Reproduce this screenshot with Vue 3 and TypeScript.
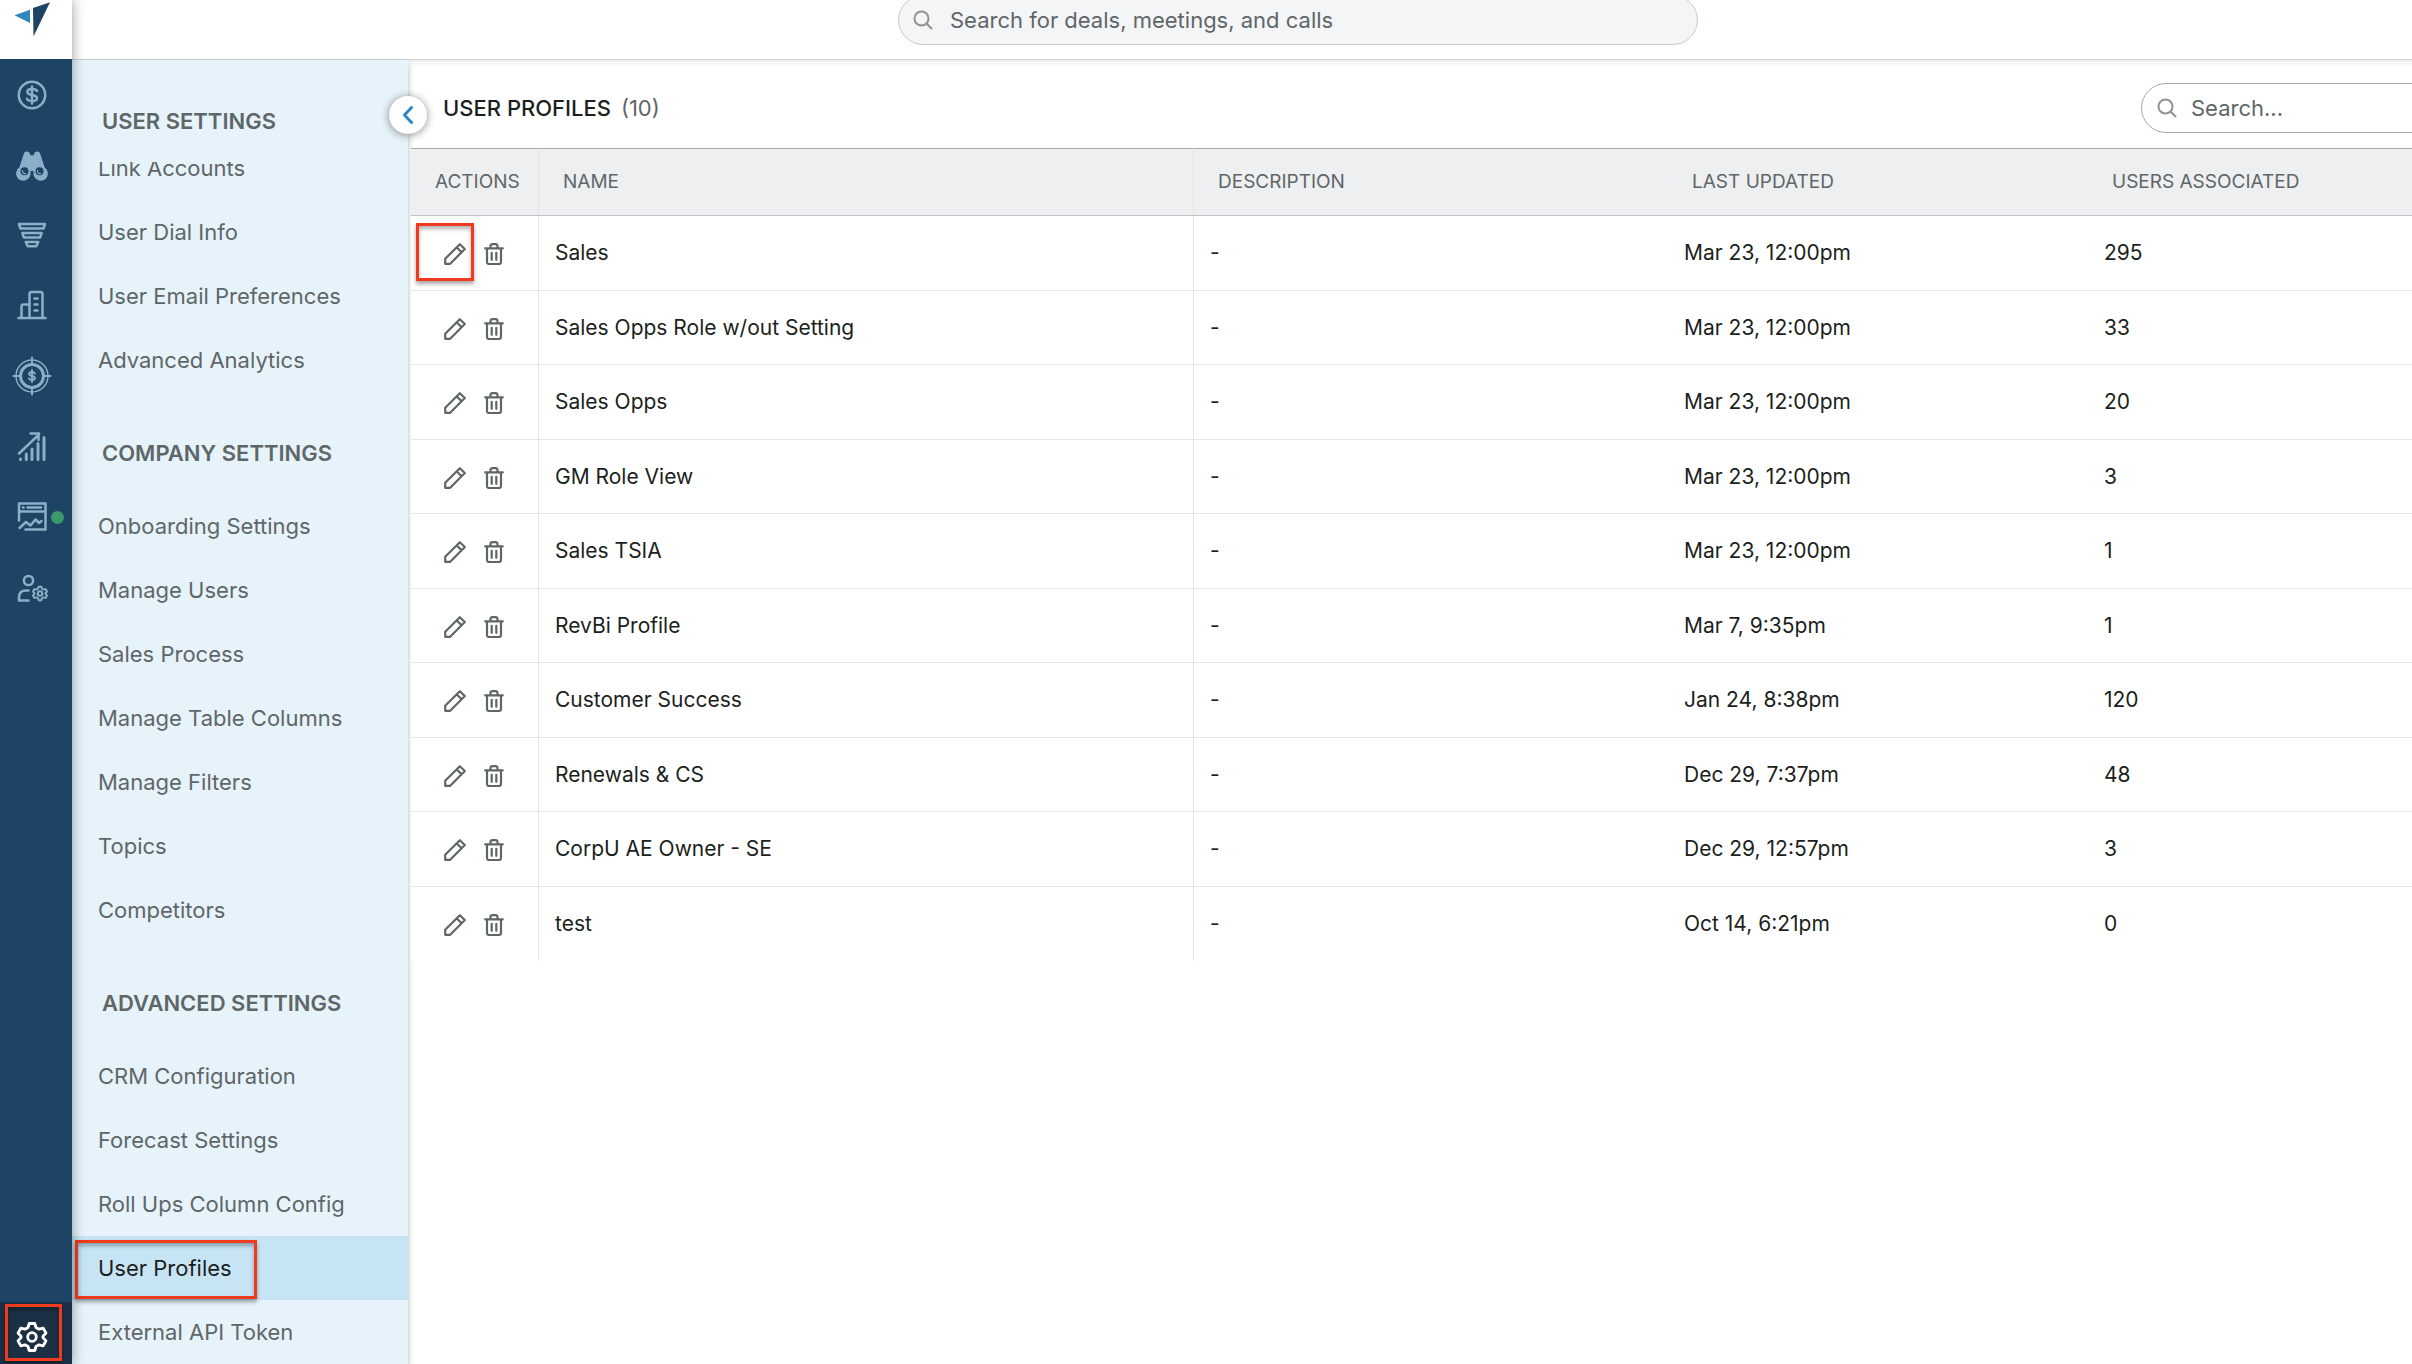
<script setup lang="ts">
import { ref } from 'vue'

interface NavSection {
  title: string
  items: string[]
}

interface Profile {
  name: string
  description: string
  updated: string
  users: number
}

const sections: NavSection[] = [
  {
    title: 'User Settings',
    items: ['Link Accounts', 'User Dial Info', 'User Email Preferences', 'Advanced Analytics'],
  },
  {
    title: 'Company Settings',
    items: [
      'Onboarding Settings',
      'Manage Users',
      'Sales Process',
      'Manage Table Columns',
      'Manage Filters',
      'Topics',
      'Competitors',
    ],
  },
  {
    title: 'Advanced Settings',
    items: [
      'CRM Configuration',
      'Forecast Settings',
      'Roll Ups Column Config',
      'User Profiles',
      'External API Token',
    ],
  },
]

const activeItem = ref('User Profiles')
const globalQuery = ref('')
const profileQuery = ref('')

const profiles: Profile[] = [
  { name: 'Sales', description: '-', updated: 'Mar 23, 12:00pm', users: 295 },
  { name: 'Sales Opps Role w/out Setting', description: '-', updated: 'Mar 23, 12:00pm', users: 33 },
  { name: 'Sales Opps', description: '-', updated: 'Mar 23, 12:00pm', users: 20 },
  { name: 'GM Role View', description: '-', updated: 'Mar 23, 12:00pm', users: 3 },
  { name: 'Sales TSIA', description: '-', updated: 'Mar 23, 12:00pm', users: 1 },
  { name: 'RevBi Profile', description: '-', updated: 'Mar 7, 9:35pm', users: 1 },
  { name: 'Customer Success', description: '-', updated: 'Jan 24, 8:38pm', users: 120 },
  { name: 'Renewals & CS', description: '-', updated: 'Dec 29, 7:37pm', users: 48 },
  { name: 'CorpU AE Owner - SE', description: '-', updated: 'Dec 29, 12:57pm', users: 3 },
  { name: 'test', description: '-', updated: 'Oct 14, 6:21pm', users: 0 },
]
</script>

<template>
  <div class="app">
    <aside class="rail">
      <a class="logo" href="#" aria-label="Home">
        <svg width="72" height="59" viewBox="0 0 72 59">
          <path d="M14.5 15.3 30 9.7V23z" fill="#2f86c0" />
          <path d="M33 8 50 2.2 33.5 36.5z" fill="#1d4464" />
        </svg>
      </a>
      <nav class="rail-nav" aria-label="Main">
        <a href="#" aria-label="Deals">
          <svg viewBox="0 0 38 38" class="icon">
            <circle cx="19" cy="19" r="13.2" />
            <path d="M19 10.5v17M24 15c-.6-1.5-2.4-2-5-2-2.8 0-4.6 1-4.6 2.9 0 4.200 9.600 2.100 9.600 6.300 0 1.900-1.900 2.800-4.900 2.800-2.900 0-4.700-.7-5.100-2.200" />
          </svg>
        </a>
        <a href="#" aria-label="Prospecting">
          <svg viewBox="0 0 38 38" class="icon">
            <path
              d="M13.5 6.500c1.400-.3 2.700.4 3.200 1.800l.5 2h3.600l.5-2c.5-1.400 1.800-2.100 3.200-1.800 1.500.2 2.300 1 2.800 2.500l4.400 13.600a7.200 7.200 0 1 1-11.200 5.600V26h-3v2.200A7.200 7.200 0 1 1 6.300 22.600L10.700 9c.5-1.500 1.300-2.300 2.800-2.500z"
              class="solid"
              transform="translate(0 -1)"
            />
            <circle cx="11.500" cy="25.200" r="4" class="cut" />
            <circle cx="26.500" cy="25.200" r="4" class="cut" />
            <path d="M9.500 24.500a2.500 2.500 0 0 0 3 3M24.500 24.500a2.500 2.500 0 0 0 3 3" stroke-width="1.200" />
          </svg>
        </a>
        <a href="#" aria-label="Pipeline">
          <svg viewBox="0 0 38 38" class="icon">
            <path d="M6 8h26l-1.500 4.500h-23zM9.300 17h19.400l-1.600 4.500H10.900zM12.700 26h12.600l-2 4.200h-8.600z" />
          </svg>
        </a>
        <a href="#" aria-label="Accounts">
          <svg viewBox="0 0 38 38" class="icon">
            <path d="M5.500 32h27M8.500 32V20.500q0-2 2-2h6M16.500 32V8q0-2 2-2h9q2 0 2 2v24" />
            <path d="M21.500 12.500h3M21.500 18.500h3M21.500 24.500h3" />
          </svg>
        </a>
        <a href="#" aria-label="Forecast">
          <svg viewBox="0 0 40 40" class="icon large">
            <circle cx="20" cy="20" r="16" stroke-width="1.500" />
            <circle cx="20" cy="20" r="11.500" stroke-width="3" />
            <path d="M20 1.500v6M20 32.500v6M1.500 20h6M32.500 20h6" stroke-width="2" />
            <path d="M20 14v12M22.800 17.500c-.5-1-1.400-1.500-2.800-1.500-1.700 0-2.800.7-2.800 1.900 0 2.700 5.700 1.400 5.700 4.200 0 1.200-1.200 2-2.900 2-1.500 0-2.600-.6-3-1.600" stroke-width="2" />
          </svg>
        </a>
        <a href="#" aria-label="Trends">
          <svg viewBox="0 0 38 38" class="icon">
            <path d="M6 25.500 26 6.500M17.500 5.500H26M25.500 6v6" />
            <path d="M7.500 31.500v-.5M13.300 31.500v-5.500M19 31.500V21M25 31.500V15.500M31 31.500V9.500" stroke-width="3" />
          </svg>
        </a>
        <a href="#" aria-label="Analytics">
          <svg viewBox="0 0 38 38" class="icon">
            <path d="M6 22.500V5.500h26.500v26h-20M6 13.500h26.500" />
            <path d="M10 9.500h.5M14.500 9.500H28" />
            <path d="m6.500 30 6.500-6 4.500 3.500 5-6 3.500 3.500 2.500-2" />
          </svg>
          <span class="dot"></span>
        </a>
        <a href="#" aria-label="Team">
          <svg viewBox="0 0 38 38" class="icon">
            <circle cx="15.500" cy="12.500" r="4.600" />
            <path d="M15.500 22.500H13q-7 0-7 7v3h9.500" />
            <g transform="translate(27 25.500) scale(.5)" stroke-width="4">
              <circle r="4.500" />
              <path
                d="M-2.800-13.500h5.600l1.200 4 3 1.700 4.200-1 2.800 4.900-3 3.100v1.600l3 3.100-2.800 4.900-4.200-1-3 1.700-1.200 4h-5.600l-1.200-4-3-1.700-4.200 1-2.800-4.900 3-3.100v-1.600l-3-3.100 2.800-4.900 4.200 1 3-1.700z"
              />
            </g>
          </svg>
        </a>
      </nav>
      <a class="settings" href="#" aria-label="Settings">
        <svg width="32" height="32" viewBox="-16 -16 32 32">
          <circle r="4.300" />
          <path
            d="M-2.800-13.500h5.600l1.200 4 3 1.700 4.200-1 2.800 4.900-3 3.100v1.600l3 3.100-2.800 4.900-4.200-1-3 1.700-1.200 4h-5.600l-1.200-4-3-1.700-4.200 1-2.800-4.900 3-3.100v-1.600l-3-3.100 2.800-4.900 4.200 1 3-1.700z"
          />
        </svg>
      </a>
    </aside>

    <div class="page">
      <header class="topbar">
        <label class="search global">
          <svg width="20" height="20" viewBox="0 0 20 20"><circle cx="8.500" cy="8.500" r="7" /><path d="m13.500 13.500 5 5" /></svg>
          <input v-model="globalQuery" type="text" aria-label="Global search" placeholder="Search for deals, meetings, and calls" />
        </label>
      </header>

      <div class="body">
        <aside class="sidebar">
          <h2 class="pinned">{{ sections[0].title }}</h2>
          <nav class="menu" aria-label="Settings">
            <div v-for="(section, index) in sections" :key="section.title" class="section">
              <h2 v-if="index > 0">{{ section.title }}</h2>
              <a
                v-for="item in section.items"
                :key="item"
                href="#"
                :class="{ active: item === activeItem }"
                @click.prevent="activeItem = item"
                >{{ item }}</a
              >
            </div>
          </nav>
          <button class="collapse" type="button" aria-label="Collapse menu">
            <svg width="12" height="20" viewBox="0 0 12 20"><path d="M9.500 2.500 2.500 10l7 7.500" /></svg>
          </button>
        </aside>

        <main class="content">
          <div class="heading">
            <h1>User Profiles <span>({{ profiles.length }})</span></h1>
            <label class="search local">
              <svg width="20" height="20" viewBox="0 0 20 20"><circle cx="8.500" cy="8.500" r="7" /><path d="m13.500 13.500 5 5" /></svg>
              <input v-model="profileQuery" type="text" aria-label="Search profiles" placeholder="Search..." />
            </label>
          </div>
          <table>
            <thead>
              <tr>
                <th class="actions">Actions</th>
                <th class="name">Name</th>
                <th>Description</th>
                <th class="updated">Last Updated</th>
                <th class="users">Users Associated</th>
              </tr>
            </thead>
            <tbody>
              <tr v-for="(profile, index) in profiles" :key="profile.name">
                <td class="actions">
                  <div class="tools">
                    <button type="button" :class="{ marked: index === 0 }" :aria-label="`Edit ${profile.name}`">
                      <svg width="22" height="22" viewBox="0 0 22 22">
                        <path d="M1.200 20.800v-5L15.800 1.200l5 4.800L6.200 20.800zM12.800 4.500l4.800 4.800" />
                      </svg>
                    </button>
                    <button type="button" :aria-label="`Delete ${profile.name}`">
                      <svg width="20" height="22" viewBox="0 0 20 22">
                        <path d="M1.200 5.300h17.600M3 5.500V19q0 2 2 2h10q2 0 2-2V5.500M6.500 5V3q0-1.800 2-1.800h3q2 0 2 1.800v2" />
                        <path d="M7.700 9.800v7M12.300 9.800v7" />
                      </svg>
                    </button>
                  </div>
                </td>
                <td class="name">{{ profile.name }}</td>
                <td>{{ profile.description }}</td>
                <td>{{ profile.updated }}</td>
                <td>{{ profile.users }}</td>
              </tr>
            </tbody>
          </table>
        </main>
      </div>
    </div>
  </div>
</template>

<style>
html,
body {
  overflow: hidden;
  background: #fff;
}
</style>

<style scoped>
.app {
  display: flex;
  width: calc(100% + 112px);
  height: 100vh;
  font-family: Inter, 'Liberation Sans', sans-serif;
  font-optical-sizing: none;
  font-size: 22px;
  line-height: 30px;
  color: #1c1f20;
}

svg {
  display: block;
  flex: none;
  fill: none;
  stroke: currentColor;
  stroke-linecap: round;
  stroke-linejoin: round;
}

a {
  color: inherit;
  text-decoration: none;
}

button {
  padding: 0;
  border: 0;
  background: none;
  color: inherit;
  cursor: pointer;
}

h1,
h2 {
  margin: 0;
  font-size: 22px;
  line-height: 30px;
  text-transform: uppercase;
}

.rail {
  position: relative;
  z-index: 2;
  display: flex;
  flex: none;
  flex-direction: column;
  width: 72px;
  background: #1d4464;
  box-shadow: 0 0 12px rgba(0, 0, 0, 0.4);
}

.logo {
  height: 59px;
  background: #fff;
}

.logo svg {
  stroke: none;
}

.rail-nav {
  display: flex;
  flex: 1;
  flex-direction: column;
  padding-top: 1px;
  color: #8bafc8;
}

.rail-nav a {
  position: relative;
  padding: 16px 13px;
}

.icon {
  width: 38px;
  height: 38px;
  stroke-width: 2.5;
}

.icon.large {
  width: 40px;
  height: 40px;
  margin: 0 -1px;
}

.icon .solid {
  fill: currentColor;
  stroke: none;
}

.icon .cut {
  fill: #1d4464;
  stroke: none;
}

.dot {
  position: absolute;
  top: 29px;
  right: 8px;
  width: 13px;
  height: 13px;
  border-radius: 50%;
  background: #3a9a6c;
}

.settings {
  position: relative;
  display: flex;
  align-items: center;
  justify-content: center;
  height: 54px;
  padding: 8px 8px 0 0;
  background: #1b3044;
  color: #fff;
}

.settings svg {
  stroke-width: 2.8;
}

.settings::after,
.active::after,
.marked::after {
  position: absolute;
  box-sizing: border-box;
  border: 3px solid #f03a1e;
  box-shadow:
    0 3px 4px rgba(0, 0, 0, 0.35),
    inset 0 3px 4px rgba(0, 0, 0, 0.3);
  content: '';
  pointer-events: none;
}

.settings::after {
  inset: 2px 10px 3px 5px;
}

.page {
  display: flex;
  flex: 1;
  flex-direction: column;
  min-width: 0;
}

.topbar {
  display: flex;
  flex: none;
  justify-content: center;
  height: 59px;
  border-bottom: 1px solid #cfd3d5;
  box-shadow: 0 2px 6px rgba(0, 0, 0, 0.1);
}

.search {
  display: flex;
  align-items: center;
  box-sizing: border-box;
  height: 50px;
  padding-left: 15px;
  border: 1px solid #a3a9ab;
  border-radius: 25px;
  color: #8e9394;
}

.search svg {
  stroke-width: 2;
}

.search input {
  flex: 1;
  min-width: 0;
  margin-left: 14px;
  padding: 0;
  border: 0;
  outline: 0;
  background: none;
  font: inherit;
  color: #1c1f20;
}

.search input::placeholder {
  color: #5f6668;
  opacity: 1;
}

.search.global {
  width: 800px;
  margin-top: -5px;
  padding-left: 14px;
  border-color: #c6cdd2;
  background: #f4f5f7;
}

.search.global input {
  margin-left: 17px;
}

.search.local {
  width: 360px;
}

.body {
  display: flex;
  flex: 1;
  min-height: 0;
}

.sidebar {
  position: relative;
  z-index: 1;
  display: flex;
  flex: none;
  flex-direction: column;
  width: 336px;
  background: #e6f3fb;
  color: #5f6668;
}

.sidebar::before {
  position: absolute;
  inset: 0;
  z-index: -1;
  box-shadow: 0 4px 6px rgba(0, 0, 0, 0.3);
  content: '';
}

.sidebar h2 {
  padding: 46px 30px 26px;
  font-weight: 600;
}

.menu {
  flex: 1;
  min-height: 0;
  overflow: hidden;
}

.section:first-child {
  margin-top: -26px;
}

.menu a {
  position: relative;
  display: block;
  padding: 17px 26px;
}

.menu .active {
  background: #c7e4f5;
  color: #1c1f20;
}

.active::after {
  inset: 4px auto 1px 3px;
  width: 182px;
}

.collapse {
  position: absolute;
  top: 36px;
  right: -19px;
  display: flex;
  align-items: center;
  justify-content: center;
  width: 38px;
  height: 38px;
  border-radius: 50%;
  background: #fff;
  box-shadow: 0 1px 8px rgba(0, 0, 0, 0.45);
  color: #2b87c6;
}

.collapse svg {
  stroke-width: 3;
}

.content {
  flex: 1;
  min-width: 0;
}

.heading {
  display: flex;
  align-items: center;
  justify-content: space-between;
  height: 80px;
  padding: 8px 23px 0 35px;
}

h1 {
  font-weight: 500;
}

h1 span {
  margin-left: 4px;
  font-weight: 400;
  color: #5f6668;
}

table {
  position: relative;
  z-index: 1;
  width: calc(100% - 3px);
  margin-left: 3px;
  border-collapse: separate;
  border-spacing: 0;
  table-layout: fixed;
  background: #fff;
  font-size: 21px;
}

th {
  box-sizing: border-box;
  height: 68px;
  padding: 0 24px;
  border-top: 1px solid #a3a9ab;
  border-bottom: 1px solid #bfc4c6;
  background: #edeff1;
  font-size: 19px;
  font-weight: 400;
  text-align: left;
  text-transform: uppercase;
  white-space: nowrap;
  color: #5f6668;
}

td {
  box-sizing: border-box;
  height: 75px;
  padding: 0 16px;
  border-bottom: 1px solid #e4e7e8;
}

tr:nth-child(even) td {
  height: 74px;
}

tr:last-child td {
  border-bottom: 0;
}

.actions {
  width: 128px;
  border-right: 1px solid #e2e5e6;
}

.name {
  width: 31%;
  border-right: 1px solid #e2e5e6;
}

.updated {
  width: 420px;
}

.users {
  width: 436px;
}

.tools {
  display: flex;
  gap: 18px;
  padding: 2px 0 0 17px;
  color: #5f6668;
}

.tools button {
  position: relative;
}

.tools svg {
  stroke-width: 2.2;
}

.marked::after {
  inset: -20px -8px -16px -28px;
}
</style>
